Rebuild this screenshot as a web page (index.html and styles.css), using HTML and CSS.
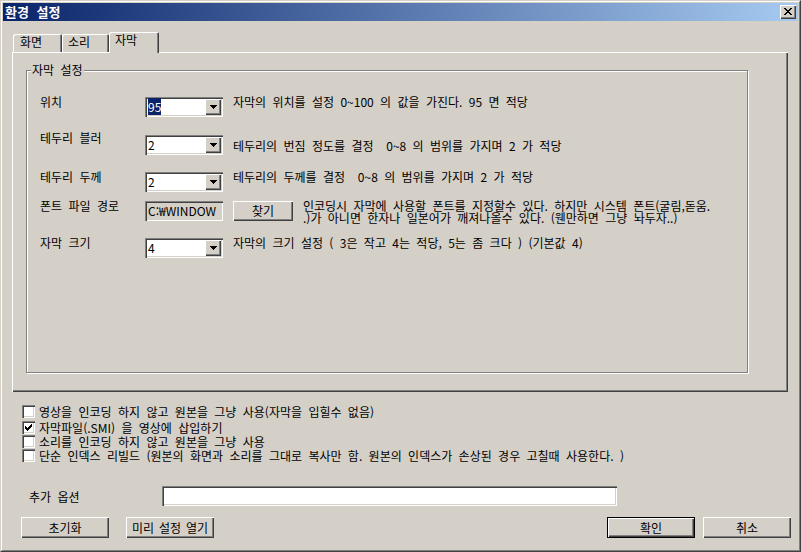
FILE: index.html
```html
<!DOCTYPE html>
<html lang="ko">
<head>
<meta charset="utf-8">
<title>환경 설정</title>
<link rel="stylesheet" href="styles.css">
</head>
<body>
<div class="window">
  <div class="frame">
    <div class="titlebar">
      <span class="title">환경 설정</span>
      <span class="close">
        <svg width="16" height="14" viewBox="0 0 16 14" shape-rendering="crispEdges"><path fill="#000" d="M4 3h2v1H4zM10 3h2v1h-2zM5 4h2v1H5zM9 4h2v1H9zM6 5h4v1H6zM7 6h2v1H7zM6 7h4v1H6zM5 8h2v1H5zM9 8h2v1H9zM4 9h2v1H4zM10 9h2v1h-2z"/></svg>
      </span>
    </div>
    <div class="client">
      <div class="tabs">
        <div class="tab t1">화면</div>
        <div class="tab t2">소리</div>
        <div class="tab t3 active">자막</div>
      </div>
      <div class="panel">
        <div class="group">
          <div class="group-title">자막 설정</div>
          <div class="rows">
            <div class="row">
              <div class="label">위치</div>
              <div class="combo"><span class="val"><span class="sel">95</span></span><span class="drop"><svg width="16" height="16" viewBox="0 0 16 16" shape-rendering="crispEdges"><path d="M5 6h7v1H5zM6 7h5v1H6zM7 8h3v1H7zM8 9h1v1H8z"/></svg></span></div>
              <div class="desc">자막의 위치를 설정 0~100 의 값을 가진다. 95 면 적당</div>
            </div>
            <div class="row r2">
              <div class="label">테두리 블러</div>
              <div class="combo"><span class="val">2</span><span class="drop"><svg width="16" height="16" viewBox="0 0 16 16" shape-rendering="crispEdges"><path d="M5 6h7v1H5zM6 7h5v1H6zM7 8h3v1H7zM8 9h1v1H8z"/></svg></span></div>
              <div class="desc">테두리의 번짐 정도를 결정&nbsp; 0~8 의 범위를 가지며 2 가 적당</div>
            </div>
            <div class="row r3">
              <div class="label">테두리 두께</div>
              <div class="combo"><span class="val">2</span><span class="drop"><svg width="16" height="16" viewBox="0 0 16 16" shape-rendering="crispEdges"><path d="M5 6h7v1H5zM6 7h5v1H6zM7 8h3v1H7zM8 9h1v1H8z"/></svg></span></div>
              <div class="desc">테두리의 두께를 결정&nbsp; 0~8 의 범위를 가지며 2 가 적당</div>
            </div>
            <div class="row r4">
              <div class="label">폰트 파일 경로</div>
              <div class="field">C:₩WINDOW</div>
              <div class="btn find">찾기</div>
              <div class="desc two">인코딩시 자막에 사용할 폰트를 지정할수 있다. 하지만 시스템 폰트(굴림,돋움.<br>.)가 아니면 한자나 일본어가 깨져나올수 있다. (웬만하면 그냥 놔두자..)</div>
            </div>
            <div class="row r5">
              <div class="label">자막 크기</div>
              <div class="combo"><span class="val">4</span><span class="drop"><svg width="16" height="16" viewBox="0 0 16 16" shape-rendering="crispEdges"><path d="M5 6h7v1H5zM6 7h5v1H6zM7 8h3v1H7zM8 9h1v1H8z"/></svg></span></div>
              <div class="desc">자막의 크기 설정 ( 3은 작고 4는 적당, 5는 좀 크다 ) (기본값 4)</div>
            </div>
          </div>
        </div>
      </div>
      <div class="checks">
        <div class="check c1"><span class="box"></span><span class="ctext">영상을 인코딩 하지 않고 원본을 그냥 사용(자막을 입힐수 없음)</span></div>
        <div class="check c2"><span class="box"><svg width="13" height="13" viewBox="0 0 13 13" shape-rendering="crispEdges"><path d="M9 3h1v1H9zM8 4h2v1H8zM3 5h1v1H3zM7 5h3v1H7zM3 6h2v1H3zM6 6h3v1H6zM3 7h5v1H3zM4 8h3v1H4zM5 9h1v1H5z"/></svg></span><span class="ctext">자막파일(.SMI) 을 영상에 삽입하기</span></div>
        <div class="check c3"><span class="box"></span><span class="ctext">소리를 인코딩 하지 않고 원본을 그냥 사용</span></div>
        <div class="check c4"><span class="box"></span><span class="ctext">단순 인덱스 리빌드 (원본의 화면과 소리를 그대로 복사만 함. 원본의 인덱스가 손상된 경우 고칠때 사용한다. )</span></div>
      </div>
      <div class="extra">
        <div class="extra-label">추가 옵션</div>
        <div class="input"></div>
      </div>
      <div class="buttons">
        <div class="btn wide b-reset">초기화</div>
        <div class="btn wide b-preset">미리 설정 열기</div>
        <div class="btn wide default b-ok">확인</div>
        <div class="btn wide b-cancel">취소</div>
      </div>
    </div>
  </div>
</div>
</body>
</html>
```

FILE: styles.css
```css
* { box-sizing: border-box; }

body {
  margin: 0;
  font-family: "Noto Sans CJK KR", "Noto Sans", sans-serif;
  font-size: 12px;
  word-spacing: 3px;
  color: #000;
  background: #d4d0c8;
}

.window {
  width: 801px;
  height: 552px;
  border: 1px solid;
  border-color: #d4d0c8 #404040 #404040 #d4d0c8;
  background: #d4d0c8;
}

.frame {
  height: 100%;
  border: 1px solid;
  border-color: #fff #808080 #808080 #fff;
  padding: 1px;
  display: flex;
  flex-direction: column;
}

.titlebar {
  height: 18px;
  flex: none;
  display: flex;
  align-items: center;
  padding-left: 2px;
  background: linear-gradient(to right, #0a246a, #a6caf0);
  color: #fff;
  font-weight: bold;
  font-size: 13px;
  word-spacing: 4px;
}

.title { flex: 1; line-height: 18px; }

.close {
  display: block;
  width: 16px;
  height: 14px;
  margin-right: 2px;
  background: #d4d0c8;
  box-shadow: inset 1px 1px #fff, inset -1px -1px #404040, inset -2px -2px #808080;
}
.close svg { display: block; }

.client { flex: 1; display: flex; flex-direction: column; }

/* tabs */
.tabs {
  display: flex;
  align-items: flex-end;
  margin-top: 11px;
  padding-left: 10px;
}
.tab {
  height: 18px;
  padding: 2px 0 0 7px;
  line-height: 12px;
  background: #d4d0c8;
  border-radius: 2px 2px 0 0;
  box-shadow: inset 1px 1px #fff, inset -1px 0 #404040, inset -2px 0 #808080;
}
.t1 { width: 49px; }
.t2 { width: 47px; padding-left: 6px; }
.t3 { width: 50px; padding-left: 6px; }
.tab.active {
  height: 21px;
  margin-bottom: -1px;
  position: relative;
  z-index: 1;
}

/* panel */
.panel {
  margin-left: 9px;
  width: 776px;
  height: 340px;
  padding: 18px 0 0 14px;
  box-shadow: inset 1px 1px #fff, inset -1px -1px #404040, inset -2px -2px #808080;
}

.group {
  width: 722px;
  height: 303px;
  border: 1px solid #808080;
  box-shadow: 1px 1px 0 #fff, inset 1px 1px 0 #fff;
}

.group-title {
  display: table;
  margin: -8px 0 0 4px;
  padding: 0 1px;
  line-height: 14px;
  background: #d4d0c8;
}

.rows { margin-top: 20px; padding-left: 13px; }

.row { display: flex; align-items: flex-start; height: 20px; }
.r2 { margin-top: 18px; }
.r3 { margin-top: 17px; }
.r4 { margin-top: 9px; }
.r5 { margin-top: 17px; }

.label { width: 105px; line-height: 12px; margin-top: -1px; white-space: nowrap; }
.desc { margin-left: 10px; line-height: 12px; margin-top: -1px; white-space: nowrap; }
.r2 .label { margin-top: -3px; }
.r2 .desc { margin-top: 5px; }
.desc.two { line-height: 12px; margin-top: -1px; }

.combo, .field, .input, .box {
  background: #fff;
  box-shadow: inset 1px 1px #808080, inset 2px 2px #404040, inset -1px -1px #fff, inset -2px -2px #d4d0c8;
}

.combo {
  width: 78px;
  height: 20px;
  padding: 2px;
  display: flex;
}
.val { flex: 1; padding-left: 1px; line-height: 16px; }
.sel { background: #0a246a; color: #fff; }
.drop {
  width: 16px;
  height: 16px;
  background: #d4d0c8;
  box-shadow: inset 1px 1px #fff, inset -1px -1px #404040, inset -2px -2px #808080;
}
.drop svg { display: block; }

.field {
  width: 78px;
  height: 20px;
  padding: 2px 2px 2px 3px;
  line-height: 16px;
  background: #d4d0c8;
  white-space: nowrap;
  overflow: hidden;
  word-spacing: 0;
}

.btn {
  display: flex;
  align-items: center;
  justify-content: center;
  background: #d4d0c8;
  box-shadow: inset 1px 1px #fff, inset -1px -1px #404040, inset -2px -2px #808080;
  line-height: 12px;
  white-space: nowrap;
}
.find { width: 60px; height: 20px; margin-left: 10px; }

/* checks */
.checks { margin-top: 13px; margin-left: 19px; }
.check { display: flex; align-items: center; height: 13px; }
.c2 { margin-top: 3px; }
.c3 { margin-top: 1px; }
.c4 { margin-top: 1px; }
.box { width: 13px; height: 13px; flex: none; }
.box svg { display: block; }
.ctext { margin-left: 4px; line-height: 13px; white-space: nowrap; }

/* extra options */
.extra { display: flex; align-items: center; margin-top: 24px; margin-left: 26px; }
.extra-label { width: 133px; }
.input { width: 455px; height: 20px; }

/* bottom buttons */
.buttons { display: flex; margin-top: 11px; padding: 0 7px 0 18px; }
.wide { width: 88px; height: 21px; word-spacing: 1.5px; }
.b-preset { margin-left: 17px; }
.b-ok { margin-left: auto; }
.b-cancel { margin-left: 8px; }
.default {
  box-shadow: inset 0 0 0 1px #000, inset 2px 2px #fff, inset -2px -2px #404040, inset -3px -3px #808080;
}
```
